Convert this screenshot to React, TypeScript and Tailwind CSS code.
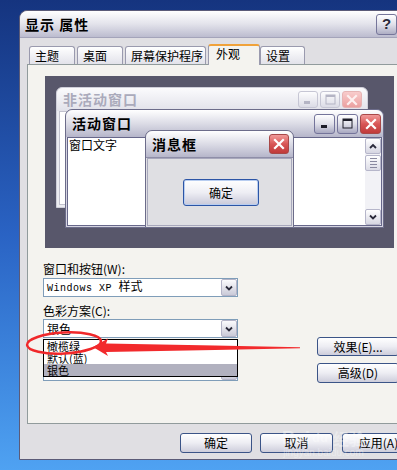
import React from 'react'

type Kind = 'min' | 'max' | 'close'

function CapBtn({ kind, size, faded }: { kind: Kind; size: string; faded?: boolean }) {
  const skin =
    kind === 'close'
      ? faded
        ? 'bg-gradient-to-b from-[#f8cccc] to-[#eba0a0] border-[#e6b4b4]'
        : 'bg-gradient-to-b from-[#f09a9a] via-[#d85656] to-[#c03a3a] border-[#a84848]'
      : faded
        ? 'bg-gradient-to-b from-[#fdfdfe] to-[#dcdce6] border-[#c6c6d4]'
        : 'bg-gradient-to-b from-[#ffffff] via-[#dfdfe9] to-[#a8a8c0] border-[#74749a]'
  const ink = faded ? '#b4b4c4' : '#1c1c28'
  return (
    <div className={`${size} ${skin} border rounded-[3px] flex items-center justify-center`}>
      {kind === 'min' && (
        <svg width="10" height="10" viewBox="0 0 10 10">
          <rect x="1" y="6" width="6" height="3" fill={ink} />
        </svg>
      )}
      {kind === 'max' && (
        <svg width="11" height="11" viewBox="0 0 11 11">
          <rect x="1" y="1" width="9" height="9" fill="none" stroke={ink} strokeWidth="1" />
          <rect x="1" y="1" width="9" height="2" fill={ink} />
        </svg>
      )}
      {kind === 'close' && (
        <svg width="12" height="12" viewBox="0 0 12 12">
          <path d="M2 2 L10 10 M10 2 L2 10" stroke={faded ? '#fdf0f0' : '#ffffff'} strokeWidth="2.2" strokeLinecap="square" />
        </svg>
      )}
    </div>
  )
}

function Chevron({ up }: { up?: boolean }) {
  return (
    <svg width="8" height="6" viewBox="0 0 8 6">
      <polyline points={up ? '1,5 4,2 7,5' : '1,1.5 4,4.5 7,1.5'} fill="none" stroke="#2a2a3a" strokeWidth="1.8" />
    </svg>
  )
}

function ScrollBtn({ up }: { up?: boolean }) {
  return (
    <div className="h-[16px] rounded-[2px] border border-[#b6b6ca] bg-gradient-to-b from-white to-[#d6d6e2] flex items-center justify-center">
      <Chevron up={up} />
    </div>
  )
}

function Combo({ children }: { children?: React.ReactNode }) {
  return (
    <div className="h-[19px] flex items-center border border-[#7f9db9] bg-white">
      <div className="flex-1 pl-[3px] leading-[14px] whitespace-nowrap">{children}</div>
      <div className="w-[16px] h-[17px] rounded-[2px] border border-[#b4b4c8] bg-gradient-to-b from-[#fbfbfd] to-[#cacad8] flex items-center justify-center">
        <Chevron />
      </div>
    </div>
  )
}

function XpButton({ children, className }: { children: React.ReactNode; className: string }) {
  return (
    <div
      className={`${className} flex items-center justify-center rounded-[3px] border border-[#3b5487] bg-gradient-to-b from-[#ffffff] via-[#ededf3] to-[#cdcddb] leading-none whitespace-nowrap`}
    >
      {children}
    </div>
  )
}

function Tab({ label, w, active }: { label: string; w: string; active?: boolean }) {
  if (active) {
    return (
      <div className={`${w} relative z-10 h-[21px] -mb-px border border-b-0 border-[#9a9aae] border-t-2 border-t-[#f0a23a] rounded-t-[3px] bg-[#f4f3ef] pl-[7px] leading-[15px]`}>
        {label}
      </div>
    )
  }
  return (
    <div className={`${w} h-[18px] mr-[2px] border border-b-0 border-[#9a9aae] rounded-t-[3px] bg-gradient-to-b from-white to-[#e2e2ea] pl-[5px] leading-[17px]`}>
      {label}
    </div>
  )
}

function Preview() {
  return (
    <div className="relative ml-[17px] mt-[11px] w-[349px] h-[172px] bg-[#58576b]">
      {/* inactive window */}
      <div className="absolute left-[11px] top-[11px] w-[312px] h-[121px] flex flex-col rounded-t-[6px] border border-[#cfcfda] bg-[#ececf1]">
        <div className="h-[23px] flex items-center pl-[6px] pr-[5px] rounded-t-[6px] bg-gradient-to-b from-[#fbfbfd] to-[#e1e1e9]">
          <span className="font-bold text-[14px] text-[#aaaabb] tracking-[1px]">非活动窗口</span>
          <div className="ml-auto flex gap-[2px]">
            <CapBtn kind="min" size="w-[20px] h-[17px]" faded />
            <CapBtn kind="max" size="w-[20px] h-[17px]" faded />
            <CapBtn kind="close" size="w-[20px] h-[17px]" faded />
          </div>
        </div>
        <div className="flex-1 mx-[2px] mb-[2px] border border-[#c2c2ce] bg-white" />
      </div>

      {/* active window */}
      <div className="absolute left-[20px] top-[33px] w-[319px] h-[119px] flex flex-col rounded-t-[7px] border border-[#6c6c8a] bg-[#d4d4e0]">
        <div className="h-[27px] flex items-center pl-[6px] pr-[2px] rounded-t-[7px] bg-gradient-to-b from-[#ffffff] via-[#dcdce6] to-[#b6b6ca]">
          <span className="font-bold text-[14px] tracking-[1px]">活动窗口</span>
          <div className="ml-auto flex gap-[2px]">
            <CapBtn kind="min" size="w-[21px] h-[20px]" />
            <CapBtn kind="max" size="w-[21px] h-[20px]" />
            <CapBtn kind="close" size="w-[21px] h-[20px]" />
          </div>
        </div>
        <div className="flex-1 mx-[1px] mb-[1px] flex border border-[#67678a] bg-white">
          <div className="flex-1 pl-[1px] leading-[14px]">窗口文字</div>
          <div className="w-[16px] flex flex-col bg-[#f2f2f6]">
            <ScrollBtn up />
            <div className="mt-[1px] h-[16px] rounded-[2px] border border-[#b6b6ca] bg-gradient-to-b from-white to-[#dcdce6] flex flex-col items-center justify-center gap-[2px]">
              <div className="w-[7px] h-px bg-[#8a8aa0]" />
              <div className="w-[7px] h-px bg-[#8a8aa0]" />
              <div className="w-[7px] h-px bg-[#8a8aa0]" />
              <div className="w-[7px] h-px bg-[#8a8aa0]" />
            </div>
            <div className="flex-1" />
            <ScrollBtn />
          </div>
        </div>
      </div>

      {/* message box */}
      <div className="absolute left-[100px] top-[54px] w-[149px] h-[98px] flex flex-col rounded-t-[7px] border border-[#6c6c8a] bg-[#dfdfe3]">
        <div className="h-[27px] flex items-center pl-[6px] pr-[4px] rounded-t-[7px] bg-gradient-to-b from-[#ffffff] via-[#dcdce6] to-[#b6b6ca] border-b border-[#8e8ea8]">
          <span className="font-bold text-[14px] tracking-[1px]">消息框</span>
          <div className="ml-auto">
            <CapBtn kind="close" size="w-[20px] h-[20px]" />
          </div>
        </div>
        <div className="flex-1 mx-[1px] mb-[1px] border border-[#a8a8bc] pt-[20px] pl-[35px]">
          <div className="w-[76px] h-[27px] flex items-center justify-center rounded-[3px] border border-[#2c55a6] bg-gradient-to-b from-[#ffffff] via-[#eeeef4] to-[#c9c9d9] shadow-[inset_0_0_0_1px_#b8cdf0]">
            确定
          </div>
        </div>
      </div>
    </div>
  )
}

export default function App() {
  return (
    <div className="relative w-[397px] h-[470px] overflow-hidden bg-gradient-to-b from-[#15347f] via-[#2a63c4] to-[#4fa2f2] font-['Noto_Sans_CJK_SC','Noto_Sans',sans-serif] text-[12px] text-black">
      <div className="ml-[19px] mt-[10px] w-[400px] h-[450px] flex flex-col rounded-t-[8px] border border-[#5b5b78] bg-[#e0dfe3]">
        {/* title bar */}
        <div className="h-[27px] flex items-center pl-[5px] rounded-t-[8px] bg-gradient-to-b from-[#ffffff] via-[#e3e3eb] to-[#bcbccf] border-b border-[#a4a4ba]">
          <span className="font-bold text-[14px] tracking-[1px]">显示 属性</span>
          <div className="ml-auto mr-[21px] w-[21px] h-[21px] rounded-[3px] border border-[#76769a] bg-gradient-to-b from-white via-[#e0e0ea] to-[#aeaec4] flex items-center justify-center font-['Liberation_Sans',sans-serif] font-bold text-[15px] text-[#2a2a3a]">
            ?
          </div>
        </div>

        {/* tabs */}
        <div className="pt-[5px] pl-[9px] h-[26px] flex items-end">
          <Tab label="主题" w="w-[46px]" />
          <Tab label="桌面" w="w-[46px]" />
          <Tab label="屏幕保护程序" w="w-[81px]" />
          <Tab label="外观" w="w-[52px]" active />
          <Tab label="设置" w="w-[45px]" />
        </div>

        {/* panel */}
        <div className="ml-[7px] w-[390px] h-[360px] border border-[#919b9c] bg-[#f4f3ef]">
          <Preview />

          <div className="flex ml-[15px] mt-[14px]">
            <div className="w-[195px] flex flex-col">
              <div className="h-[14px] leading-[14px]">窗口和按钮(W):</div>
              <div className="mt-[2px]">
                <Combo>
                  <span className="font-['Liberation_Mono',monospace] text-[10px] tracking-[0.5px]">Windows XP </span>
                  样式
                </Combo>
              </div>
              <div className="mt-[7px] h-[14px] leading-[14px]">色彩方案(C):</div>
              <div className="relative mt-px">
                <Combo>银色</Combo>
                {/* open dropdown list */}
                <div className="absolute left-0 top-[20px] z-20 w-[195px] border border-black bg-white flex flex-col text-[11px]">
                  <div className="h-[12px] leading-[12px] pl-[3px]">橄榄绿</div>
                  <div className="h-[12px] leading-[12px] pl-[3px]">默认(蓝)</div>
                  <div className="h-[12px] leading-[12px] pl-[3px] bg-[#b1b1bf]">银色</div>
                </div>
              </div>
              {/* font size row, hidden under the list */}
              <div className="mt-[9px] h-[14px]" />
              <div className="mt-px">
                <Combo />
              </div>
            </div>

            <div className="ml-[79px] pt-[75px] flex flex-col gap-[7px]">
              <XpButton className="w-[82px] h-[19px]">效果(E)...</XpButton>
              <XpButton className="w-[82px] h-[20px]">高级(D)</XpButton>
            </div>
          </div>
        </div>

        {/* bottom buttons */}
        <div className="mt-[9px] ml-[160px] flex">
          <XpButton className="w-[72px] h-[20px]">确定</XpButton>
          <XpButton className="ml-[8px] w-[73px] h-[20px]">取消</XpButton>
          <XpButton className="ml-[9px] w-[73px] h-[20px]">应用(A)</XpButton>
        </div>
      </div>

      {/* watermark */}
      <div className="absolute left-[282px] top-[428px] z-30 flex flex-col items-center pointer-events-none text-white/35">
        <div className="flex items-center gap-[2px] font-['Liberation_Sans',sans-serif] font-bold text-[18px] leading-[20px]">
          <span>Bai</span>
          <span className="text-[13px]">du</span>
          <span className="ml-[3px] font-['Noto_Sans_CJK_SC',sans-serif] text-[16px]">经验</span>
        </div>
        <div className="font-['Liberation_Sans',sans-serif] text-[10px] leading-[10px]">jingyan.baidu.com</div>
      </div>

      {/* red annotation */}
      <svg className="absolute left-0 top-0 z-40 pointer-events-none" width="397" height="470" viewBox="0 0 397 470">
        <ellipse cx="64" cy="343" rx="37" ry="10.5" fill="none" stroke="#f0282a" strokeWidth="2.5" transform="rotate(-3 64 343)" />
        <polygon
          points="93,347 108,338.5 106,343.5 215,345.6 300,347.3 300,348.2 215,350 106,352 108,356"
          fill="#f22a2c"
        />
      </svg>
    </div>
  )
}
